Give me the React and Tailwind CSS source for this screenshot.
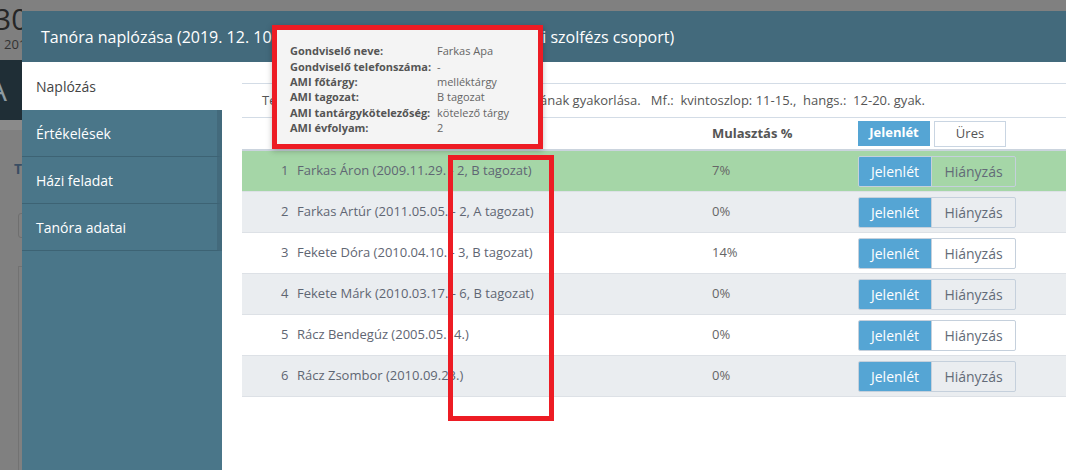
export default function App() {
  const rows = [
    { n: 1, name: "Farkas Áron (2009.11.29. - 2, B tagozat)", p: "7%", bg: "bg-[#a5d6a7]" },
    { n: 2, name: "Farkas Artúr (2011.05.05. - 2, A tagozat)", p: "0%", bg: "bg-[#eaedf0]" },
    { n: 3, name: "Fekete Dóra (2010.04.10. - 3, B tagozat)", p: "14%", bg: "bg-white" },
    { n: 4, name: "Fekete Márk (2010.03.17. - 6, B tagozat)", p: "0%", bg: "bg-[#eaedf0]" },
    { n: 5, name: "Rácz Bendegúz (2005.05.14.)", p: "0%", bg: "bg-white" },
    { n: 6, name: "Rácz Zsombor (2010.09.23.)", p: "0%", bg: "bg-[#eaedf0]" },
  ];
  const tip = [
    ["Gondviselő neve:", "Farkas Apa"],
    ["Gondviselő telefonszáma:", "-"],
    ["AMI főtárgy:", "melléktárgy"],
    ["AMI tagozat:", "B tagozat"],
    ["AMI tantárgykötelezőség:", "kötelező tárgy"],
    ["AMI évfolyam:", "2"],
  ];
  return (
    <div className="relative w-[1066px] h-[470px] overflow-hidden bg-[#808080] flex font-['Open_Sans',sans-serif]">
      {/* page behind the overlay */}
      <div className="w-[22px] shrink-0 flex flex-col overflow-hidden">
        <div className="h-[60px] bg-[#7f7f7f] flex flex-col">
          <div className="text-[30px] leading-[30px] text-[#262626] -ml-[6px] mt-[4px] whitespace-nowrap">30</div>
          <div className="text-[13px] leading-[14px] text-[#333] ml-[4px] mt-[3px] whitespace-nowrap">2019</div>
        </div>
        <div className="h-[60px] bg-[#1f2e36] flex items-center">
          <div className="text-[30px] text-[#8e9ba2] -ml-[12px] leading-none">A</div>
        </div>
        <div className="h-[10px] bg-[#8a8a8a]" />
        <div className="flex-1 bg-[#808080] flex flex-col">
          <div className="mt-[29px] ml-[14px] text-[14px] font-bold text-[#3a4e63] leading-[20px] whitespace-nowrap">Ta</div>
          <div className="mt-[34px] ml-[18px] w-[30px] h-[25px] border border-[#6f6f6f] rounded-[3px]" />
          <div className="mt-[28px] ml-[18px] w-[30px] flex-1 border-l border-t border-[#727272]" />
        </div>
      </div>

      {/* modal */}
      <div className="flex-1 min-w-0 flex flex-col pt-[11px]">
        <div className="h-[51px] shrink-0 bg-[#436a7c] flex items-center pl-[19px] text-white text-[16px] whitespace-nowrap">
          Tanóra naplózása (2019. 12. 10. 14:00-14:45, Szolfézs A, 2. évfolyami szolfézs csoport)
        </div>
        <div className="flex-1 flex bg-white">
          <div className="w-[200px] shrink-0 bg-[#4a7689] flex flex-col">
            <div className="h-[48px] bg-white pl-[14px] flex items-center text-[14px] text-[#444]">Naplózás</div>
            {["Értékelések", "Házi feladat", "Tanóra adatai"].map((t) => (
              <div key={t} className="h-[47px] pl-[14px] flex items-center text-[14px] text-white border-b border-b-[#3d6374] border-r-[5px] border-r-[#436a7c]">
                {t}
              </div>
            ))}
          </div>
          <div className="flex-1 min-w-0 pl-[20px] pt-[21px]">
            <div className="h-[35px] border-t border-b border-[#d3dce6] flex items-center pl-[20px] text-[13px] text-[#555] whitespace-nowrap">
              Terve: Hangközök éneklése, a szinkópa ritmusának gyakorlása.&nbsp;&nbsp; Mf.:&nbsp; kvintoszlop: 11-15.,&nbsp; hangs.:&nbsp; 12-20. gyak.
            </div>
            <div className="h-[33px] border-b-2 border-[#cbd4de] flex items-center">
              <div className="w-[470px] shrink-0" />
              <div className="w-[146px] shrink-0 text-[13px] font-bold text-[#555]">Mulasztás %</div>
              <div className="flex gap-[4px]">
                <div className="w-[72px] h-[25px] bg-[#55a5d4] text-white text-[13px] font-bold flex items-center justify-center">Jelenlét</div>
                <div className="w-[72px] h-[26px] bg-white border border-[#c9d5e2] text-[#555] text-[13px] flex items-center justify-center">Üres</div>
              </div>
            </div>
            {rows.map((r) => (
              <div key={r.n} className={`h-[41px] border-b border-[#dde1e6] flex items-center ${r.bg}`}>
                <div className="w-[39px] shrink-0" />
                <div className="w-[16px] shrink-0 text-[13px] text-[#5f6673]">{r.n}</div>
                <div className="w-[415px] shrink-0 text-[13px] text-[#5f6673] whitespace-nowrap">{r.name}</div>
                <div className="w-[146px] shrink-0 text-[13px] text-[#666]">{r.p}</div>
                <div className="flex h-[31px] border border-[#c5d0dc] rounded-[2px] overflow-hidden">
                  <div className="w-[72px] bg-[#55a5d4] text-white text-[14px] flex items-center justify-center">Jelenlét</div>
                  <div className="w-[84px] border-l border-[#c5d0dc] text-[#636b78] text-[14px] flex items-center justify-center">Hiányzás</div>
                </div>
              </div>
            ))}
          </div>
        </div>
      </div>

      {/* tooltip with red annotation */}
      <div className="absolute left-[272px] top-[25px] w-[271px] h-[124px] border-[5px] border-[#ed1c24] bg-[#f4f4f4] shadow-[0_2px_6px_rgba(0,0,0,0.25)] pl-[13px] pt-[14px]">
        {tip.map(([a, b]) => (
          <div key={a} className="flex h-[15.3px] items-center text-[11px] whitespace-nowrap">
            <div className="w-[147px] shrink-0 font-bold text-[#555]">{a}</div>
            <div className="text-[#666]">{b}</div>
          </div>
        ))}
      </div>

      {/* red annotation rectangle */}
      <div className="absolute left-[448px] top-[155px] w-[106px] h-[266px] border-[5px] border-[#ed1c24]" />
    </div>
  );
}
